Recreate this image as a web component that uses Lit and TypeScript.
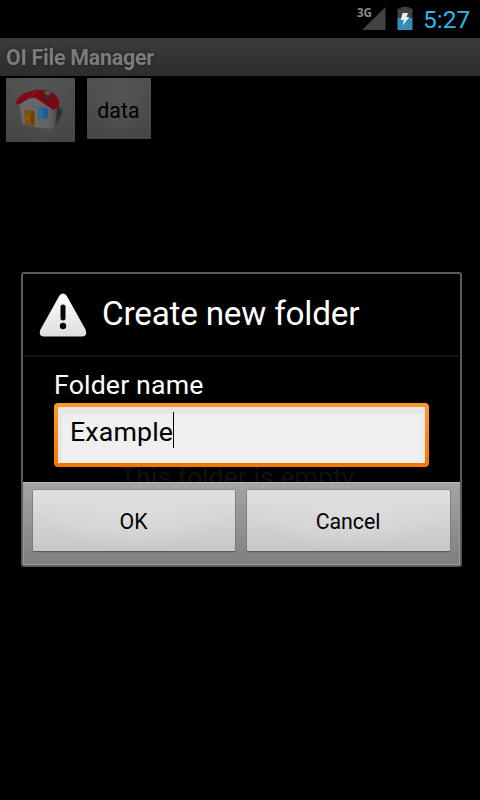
import { LitElement, html, css } from "lit";
import { customElement, property } from "lit/decorators.js";

@customElement("status-bar")
class StatusBar extends LitElement {
  static styles = css`
    :host { display: flex; height: 38px; box-sizing: border-box; background: #000; justify-content: flex-end; padding-right: 10px; }
    .icons { display: block; width: 64px; height: 38px; }
    .net { font: bold 12.5px "Open Sans", sans-serif; fill: #8a8a8a; }
    .clock { width: 47px; margin-left: 3px; font: 24.5px/40px Roboto, sans-serif; color: #33b5e5; white-space: nowrap; }
  `;
  render() {
    return html`
      <svg class="icons" viewBox="356 0 64 38">
        <path d="M385.5 7V30H362Z" fill="#424242" />
        <text class="net" x="357" y="17" textLength="15" lengthAdjust="spacingAndGlyphs">3G</text>
        <path d="M397.5 8.500H401V7H409V8.500H412.500V18H397.500Z" fill="#424242" />
        <path d="M397.500 18H412.500V30H397.500Z" fill="#338fb5" />
        <path d="M402.500 13H408L406.500 17H409.500L402.500 25.500L404 20H400.800Z" fill="#eee" />
      </svg>
      <span class="clock">5:27</span>
    `;
  }
}

@customElement("create-dialog")
class CreateDialog extends LitElement {
  @property() value = "Example";
  static styles = css`
    :host { display: flex; flex-direction: column; box-sizing: border-box; width: 441px; height: 295px; border: 2px solid #5c5a5c; border-radius: 3px; font-family: Roboto, sans-serif; overflow: hidden; }
    .head { display: flex; height: 81px; box-sizing: border-box; align-items: center; padding: 0 0 2px 15px; }
    .alert { width: 50px; height: 46px; margin-top: 2px; flex: none; }
    .title { margin-left: 14px; font-size: 33.3px; line-height: 40px; letter-spacing: -.22px; color: #fff; white-space: nowrap; }
    .rule { height: 2px; margin: 0 1px; background: #141414; }
    .body { height: 125px; box-sizing: border-box; padding: 11px 31px 0; }
    .label { height: 35px; font-size: 26.7px; line-height: 34px; letter-spacing: .15px; color: #fff; white-space: nowrap; }
    .field { display: flex; box-sizing: border-box; width: 375px; height: 64px; padding: 4px; border-radius: 4px; background: linear-gradient(#ff9a2a, #f57600); }
    .inner { flex: 1; display: flex; align-items: flex-start; padding: 5px 0 0 12px; background: #efefef; box-shadow: inset 5px 8px 0 -1px #e7e7e7, inset -4px 0 0 #ebebeb; font-size: 26.7px; line-height: 40px; letter-spacing: .17px; color: #000; }
    .caret { width: 1px; height: 36px; background: #000; }
    .bar { flex: 1; display: flex; gap: 12px; padding: 8px 10px 14px; box-sizing: border-box; background: linear-gradient(#a6a4a6, #807e80); box-shadow: inset 0 1px #bbb, inset 1px -1px #9d9b9d, inset -1px 0 #9d9b9d; }
    .btn { flex: 1; display: flex; align-items: center; justify-content: center; box-sizing: border-box; padding: 1px 1px 0 0; border-radius: 1px; background: radial-gradient(ellipse at 50% 20%, #dfdedf 0, transparent 70%), linear-gradient(#e0e0e0, #c7c6c8); box-shadow: 0 0 0 .6px #777, 0 1px 1px #3a3a3a; font-size: 21.3px; letter-spacing: -.05px; color: #000; }
    .ok { flex: 0 0 202px; }
  `;
  render() {
    return html`
      <div class="head">
        <svg class="alert" viewBox="0 0 50 46">
          <defs><linearGradient id="g" x2="0" y2="1"><stop stop-color="#fff" /><stop offset="1" stop-color="#dedcde" /></linearGradient></defs>
          <path d="M21.300 3.800Q25 -.8 28.700 3.800L47.500 37.500Q50 44.500 44 44.500H6Q0 44.500 2.500 37.500Z" fill="url(#g)" />
          <path d="M25 15V26" stroke="#080808" stroke-width="5" stroke-linecap="round" />
          <circle cx="25" cy="34" r="3.200" fill="#080808" />
        </svg>
        <span class="title">Create new folder</span>
      </div>
      <div class="rule"></div>
      <div class="body">
        <div class="label">Folder name</div>
        <div class="field"><div class="inner"><span>${this.value}</span><span class="caret"></span></div></div>
      </div>
      <div class="bar"><div class="btn ok">OK</div><div class="btn">Cancel</div></div>
    `;
  }
}

@customElement("app-root")
class AppRoot extends LitElement {
  static styles = css`
    :host { display: block; position: relative; width: 480px; height: 800px; overflow: hidden; background: #000; font-family: Roboto, sans-serif; }
    .titlebar { height: 38px; box-sizing: border-box; padding-left: 6px; background: linear-gradient(#3b3b3b, #2d2d2d); color: #7c7c7c; font-weight: bold; font-size: 21.3px; line-height: 40px; letter-spacing: -.2px; text-shadow: 0 0 3px #1a1a1a; white-space: nowrap; }
    .path { display: flex; align-items: flex-start; gap: 12px; padding: 2px 6px; }
    .tile { display: flex; align-items: center; justify-content: center; box-sizing: border-box; border-radius: 1px; background: radial-gradient(ellipse at 50% 40%, #545454 0, transparent 70%), linear-gradient(#505050, #464646); color: #000; }
    .home { width: 69px; height: 64px; }
    .data { width: 64px; height: 61px; padding: 3px 1px 0 0; font-size: 21.3px; letter-spacing: .1px; }
    .house { width: 69px; height: 64px; }
    .empty { position: absolute; left: 0; right: 0; top: 461px; text-align: center; font-size: 26.7px; line-height: 32px; color: #111; }
    .dialog { position: absolute; left: 21px; top: 272px; }
  `;
  render() {
    return html`
      <status-bar></status-bar>
      <div class="titlebar">OI File Manager</div>
      <div class="path">
        <div class="tile home">
          <svg class="house" viewBox="6 78 69 64">
            <defs>
              <linearGradient id="roof" x2="1" y2="1"><stop stop-color="#7d0b15" /><stop offset="1" stop-color="#720812" /></linearGradient>
              <linearGradient id="side"><stop stop-color="#696969" /><stop offset=".8" stop-color="#626262" /><stop offset="1" stop-color="#484848" /></linearGradient>
              <filter id="soft"><feGaussianBlur stdDeviation=".8" /></filter>
            </defs>
            <path d="M56 104L62.500 111L60 118L52 128Z" fill="#2c2c2c" filter="url(#soft)" />
            <path d="M19 103L33 96L54 107L57.500 107L55 127L52 129L35 127L22.500 124Z" fill="url(#side)" />
            <path d="M36 108V127" stroke="#6d6d6d" stroke-width="1" />
            <path d="M16 102.500Q18.500 96 24 93.500L36.500 89.500L47 90.500L54 93.500Q58 97 59.500 103L58 107.500L53 110L44 103.500L35 97.500L29 98.500L18 105Q15.800 104 16 102.500Z" fill="url(#roof)" />
            <path d="M35.500 90.500L37.500 91L30 98L28 98.500Z" fill="#9a1722" />
            <path d="M44.300 93L50.500 93.500L49 100L45 98.500Z" fill="#303030" />
            <path d="M44 92.500L46.500 91L51 92L50 95L46 95Z" fill="#555" />
            <path d="M24.500 110L34.500 111V126L25.500 124Z" fill="#704000" />
            <path d="M24.500 110L31 110.700V125L25.500 124Z" fill="#805008" />
            <circle cx="27.500" cy="118.500" r=".8" fill="#b09050" />
            <path d="M38 107.500L48.300 108.500L48 119L38 117Z" fill="#16608f" />
            <path d="M38.500 108L43 108.500V117.500L38.500 116.500Z" fill="#24709d" />
          </svg>
        </div>
        <div class="tile data">data</div>
      </div>
      <div class="empty">This folder is empty.</div>
      <create-dialog class="dialog"></create-dialog>
    `;
  }
}
